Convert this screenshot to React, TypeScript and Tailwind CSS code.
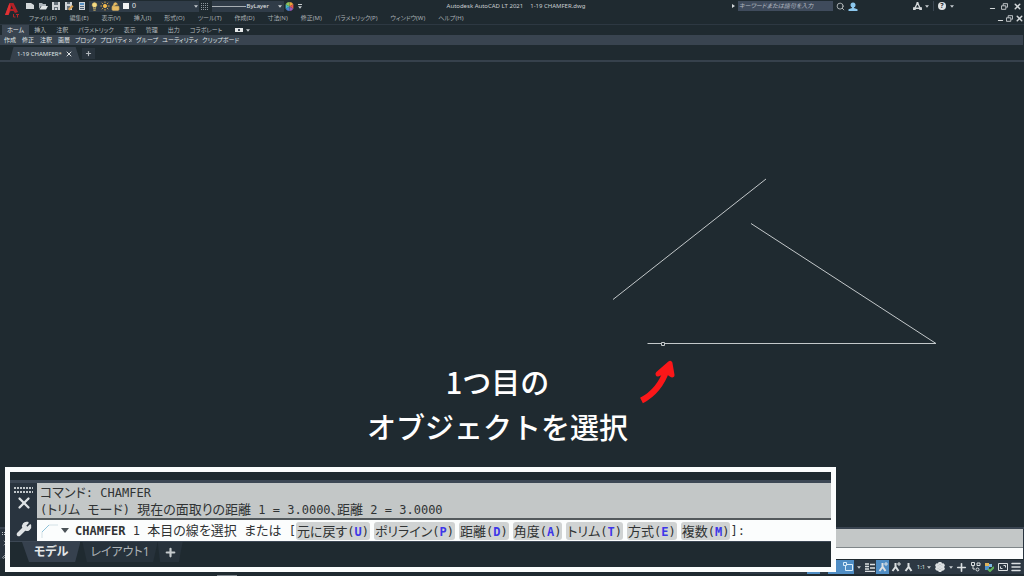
import type { ReactNode } from 'react';
import { Lightbulb, Sun, LockOpen, Search, Settings, Plus, X, Copy, Menu, Wrench, Minus } from 'lucide-react';

const menus = ['ファイル(F)', '編集(E)', '表示(V)', '挿入(I)', '形式(O)', 'ツール(T)', '作成(D)', '寸法(N)', '修正(M)', 'パラメトリック(P)', 'ウィンドウ(W)', 'ヘルプ(H)'];
const ribbonTabs = ['ホーム', '挿入', '注釈', 'パラメトリック', '表示', '管理', '出力', 'コラボレート'];
const panels = ['作成', '修正', '注釈', '画層', 'ブロック', 'プロパティ', 'グループ', 'ユーティリティ', 'クリップボード'];

const options = [
  { label: '元に戻す', hotkey: 'U' },
  { label: 'ポリライン', hotkey: 'P' },
  { label: '距離', hotkey: 'D' },
  { label: '角度', hotkey: 'A' },
  { label: 'トリム', hotkey: 'T' },
  { label: '方式', hotkey: 'E' },
  { label: '複数', hotkey: 'M' },
];

function Caret() {
  return (
    <svg viewBox="0 0 6 4" className="h-[3px] w-[4px] shrink-0 fill-[#c6cbcf]">
      <path d="M0 0h6L3 4z" />
    </svg>
  );
}

// ASCII runs use the monospaced face, Japanese runs the proportional one
function CommandText({ text }: { text: string }) {
  return (
    <>
      {text.split(/([ -~]+)/).map((part, i) =>
        i % 2 ? (
          <span key={i} className="font-['DejaVu_Sans_Mono',monospace] text-[12px]">{part}</span>
        ) : (
          part
        ),
      )}
    </>
  );
}

function Logo() {
  return (
    <svg viewBox="0 0 18 20" className="h-[20px] w-[18px]">
      <path d="M2 14 6.500 2h4l4.500 9-3 1-1.500-2H7.500L5.500 14z" fill="#b32227" />
      <path d="M8.500 4.500 10 8H7.500z" fill="#1f2a30" />
      <path d="M2 14 6.500 2 7.500 6 5.500 14z" fill="#e03234" />
      <path d="M10.500 13v3h2M13 13.500h3M14.500 13.500v3" stroke="#b3262a" fill="none" />
    </svg>
  );
}

function TitleBar() {
  return (
    <div className="flex h-[12px] items-center">
      <div className="flex flex-1 items-center">
        <div className="flex items-center gap-[3px] text-[#d4d8da]">
          <button aria-label="新規作成">
            <svg viewBox="0 0 10 8" className="h-[8px] w-[10px]"><path d="M1 1h5l3 2v4H1z" fill="#d4d8da" /></svg>
          </button>
          <button aria-label="開く">
            <svg viewBox="0 0 10 8" className="h-[8px] w-[10px]">
              <path d="M1 7V1h3l1 1h3v2H3z" fill="#aeb5ba" />
              <path d="M1.500 7.500 3.500 4H10L8 7.500z" fill="#e3e6e7" />
            </svg>
          </button>
          <button aria-label="上書き保存">
            <svg viewBox="0 0 10 10" className="size-[10px]">
              <path d="M1 1h8v8H1z" fill="#cfd4d7" />
              <path d="M3 1h4v3H3zM3 6h4v3H3z" fill="#66717a" />
              <path d="M4 7h2v2H4z" fill="#cfd4d7" />
            </svg>
          </button>
          <button aria-label="名前を付けて保存">
            <svg viewBox="0 0 10 10" className="size-[10px]">
              <path d="M1 1h7v8H1z" fill="#cfd4d7" />
              <path d="M3 1h3v2H3zM3 5h3v4H3z" fill="#66717a" />
              <path d="M4 8l4-4 1.500 1.500-4 4z" fill="#d9a254" />
            </svg>
          </button>
          <button aria-label="印刷">
            <svg viewBox="0 0 10 10" className="size-[10px]">
              <path d="M2 1h6v8H2z" fill="#cfd4d7" />
              <path d="M3 2h4v2H3z" fill="#568fc2" />
              <path d="M3 5h4v1H3zM3 7h4v1H3z" fill="#4b6078" />
            </svg>
          </button>
        </div>
        <button className="ml-[2px] flex h-[11px] w-[110px] items-center gap-[1px] bg-[#303c48] px-[1px] text-[#e4e7e9]">
          <Lightbulb className="size-[9px] text-[#efcf70]" fill="#f5db85" />
          <Sun className="size-[10px] text-[#f0b84c]" fill="#f0b84c" />
          <LockOpen className="size-[9px] text-[#e7bb62]" fill="#e7bb62" />
          <span className="ml-[2px] size-[6px] bg-[#f1f2f2]" />
          <span className="ml-[2px] flex-1 text-left text-[7px]">0</span>
          <Caret />
        </button>
        <svg viewBox="0 0 8 7" className="ml-[2px] h-[7px] w-[8px]">
          <path d="M0 .5h8M0 2.500h8M0 4.500h8M0 6.500h8" stroke="#8c959c" strokeDasharray="1 1" />
        </svg>
        <button className="ml-[3px] flex h-[11px] w-[72px] items-center gap-[1px] bg-[#303c48] pr-[2px] text-[#e4e7e9]">
          <span className="h-px flex-1 bg-[#a8afb4]" />
          <span>ByLayer</span>
          <span className="w-[7px]" />
          <Caret />
        </button>
        <svg viewBox="0 0 10 10" className="ml-px size-[9px]">
          <path d="M5 5V0a5 5 0 0 1 4.300 2.500z" fill="#e8a33d" />
          <path d="M5 5 9.300 2.500v5z" fill="#e4574f" />
          <path d="M5 5l4.300 2.500A5 5 0 0 1 5 10z" fill="#9a58b5" />
          <path d="M5 5v5A5 5 0 0 1 .7 7.500z" fill="#4b80d1" />
          <path d="M5 5 .7 7.500v-5z" fill="#46b7c0" />
          <path d="M5 5 .7 2.500A5 5 0 0 1 5 0z" fill="#8fc35b" />
        </svg>
        <span className="ml-[4px] flex flex-col items-center gap-px">
          <span className="h-px w-[4px] bg-[#c6cbcf]" />
          <Caret />
        </span>
      </div>
      <div className="flex gap-[7px] pr-[17px] text-[#c9ced1]">
        <span>Autodesk AutoCAD LT 2021</span>
        <span>1-19 CHAMFER.dwg</span>
      </div>
      <div className="flex flex-1 items-center justify-end text-[#d4d8da]">
        <svg viewBox="0 0 3 4" className="mr-[3px] h-[4px] w-[3px]"><path d="M0 0l3 2-3 2z" fill="#d4d8da" /></svg>
        <input aria-label="検索" placeholder="キーワードまたは語句を入力" className="h-[10px] w-[95px] bg-[#3f4b5c] px-[1px] italic placeholder:text-[#b4bac2]" />
        <button aria-label="検索を実行" className="ml-[3px]"><Search className="size-[9px]" /></button>
        <button aria-label="サインイン" className="ml-[3px]">
          <svg viewBox="0 0 10 9" className="h-[9px] w-[10px]" fill="#8cc8ee"><circle cx="5" cy="3" r="2.500" /><path d="M4 5h2v1l3.500 1.200V9H.5V7.200L4 6z" /></svg>
        </button>
        <button aria-label="アプリ" className="ml-[55px] flex items-center gap-[3px]">
          <svg viewBox="0 0 10 9" className="h-[8px] w-[9px]"><path d="M5 1 2 7h6L5 1" fill="none" stroke="#d4d8da" strokeWidth="1.500" /><path d="M0 6h3v3H0zM7 6h3v3H7zM4 0h2v3H4z" fill="#d4d8da" /></svg>
          <Caret />
        </button>
        <span className="mx-[4px] h-[10px] w-px bg-[#3b4651]" />
        <button aria-label="ヘルプ" className="flex items-center gap-[4px]">
          <span className="flex size-[8px] items-center justify-center rounded-full bg-[#dfe2e3] text-[7px] font-bold text-[#1f2a30]">?</span>
          <Caret />
        </button>
        <WindowButtons className="ml-[35px] gap-[5px] pr-[2px]" />
      </div>
    </div>
  );
}

function WindowButtons({ className }: { className: string }) {
  return (
    <div className={`flex items-center text-[#d4d8da] ${className}`}>
      <button aria-label="最小化" className="pt-[4px]"><Minus className="size-[7px]" strokeWidth={4} /></button>
      <button aria-label="元のサイズに戻す">
        <svg viewBox="0 0 8 8" className="size-[7px]" fill="none" stroke="currentColor"><path d="M2.500 3V.8h5v4H6M.5 3.200h5v4h-5z" /></svg>
      </button>
      <button aria-label="閉じる"><X className="size-[9px]" strokeWidth={4} /></button>
    </div>
  );
}

function Ribbon() {
  return (
    <>
      <div className="flex h-[10px] items-center pl-[2px] text-[#b2b8bc]">
        {ribbonTabs.map((tab, i) => (
          <button key={tab} className={`h-[10px] px-[5px] ${i === 0 ? 'bg-[#394450] text-[#e4e7e8]' : ''}`}>{tab}</button>
        ))}
        <button aria-label="リボンを最小化" className="ml-[8px] flex items-center gap-[3px]">
          <span className="flex h-[4px] w-[8px] items-center justify-center bg-[#e4e7e8]">
            <span className="size-[2px] bg-[#394450]" />
          </span>
          <Caret />
        </button>
      </div>
      <div className="mr-px flex h-[10px] items-center bg-[#394450] pl-px text-[#dfe2e4]">
        {panels.map((panel) => (
          <button key={panel} className={`flex items-center gap-[2px] ${panel.length > 2 ? 'px-[2px]' : 'px-[3px]'}`}>
            {panel}
            {panel === 'プロパティ' && (
              <svg viewBox="0 0 4 4" className="size-[3px]"><path d="M0 0l2 2-2 2M2 0l2 2-2 2" fill="none" stroke="#c6cbcf" /></svg>
            )}
          </button>
        ))}
      </div>
      <div className="flex h-[15px] items-end gap-[2px] pl-[10px]">
        <div className="flex h-[13px] items-center bg-[#36414c] pr-[7px] pl-[7px] text-[#dfe2e4] [clip-path:polygon(5%_0,94%_0,100%_100%,0_100%)]">
          <button>1-19 CHAMFER*</button>
          <button aria-label="図面を閉じる" className="ml-[3px]"><X className="size-[8px]" strokeWidth={3} /></button>
        </div>
        <button aria-label="新しい図面" className="mb-px flex h-[11px] w-[13px] items-center justify-center bg-[#29343d] text-[#b2b8bc]"><Plus className="size-[7px]" strokeWidth={4} /></button>
      </div>
      <div className="h-[2px] bg-[#36414c]" />
    </>
  );
}

function DrawingArea() {
  return (
    <main className="relative flex-1">
      <svg viewBox="0 0 1024 465" className="block w-full" fill="none">
        <g stroke="#c3c8ca" strokeWidth="1">
          <path d="M613 237.500 766 117M751 161.500l185 120M647.500 281.500H936" />
          <path d="M661.500 280.500h3v3h-3z" fill="#1f2a30" />
        </g>
        <path d="M641.500 338.500C654 332 662 322 667 307" stroke="#fb1719" strokeWidth="6" />
        <path d="M658 312 670 301.500 672 313 666 309z" fill="#fb1719" stroke="#fb1719" strokeWidth="5" strokeLinejoin="round" />
      </svg>
      <p className="absolute inset-x-0 top-[297px] pr-[29px] text-center font-['Noto_Sans_CJK_JP',sans-serif] text-[29px] leading-[45px] font-medium text-white [font-feature-settings:normal]">
        1つ目の
        <br />
        オブジェクトを選択
      </p>
    </main>
  );
}

function DockedCommandLine() {
  return (
    <div className="flex border-t-2 border-[#394450] bg-[#29343f] pr-px">
      <div className="flex w-[12px] flex-col items-center gap-[4px] pt-[3px] text-[#cfd4d7]">
        <svg viewBox="0 0 8 3" className="h-[3px] w-[8px]"><path d="M0 .5h8M0 2.500h8" stroke="#c0c6ca" strokeDasharray="1 1" /></svg>
        <X className="size-[8px]" />
        <Wrench className="size-[8px]" />
      </div>
      <div className="flex-1">
        <div className="h-[19px] border-b border-[#7f8689] bg-[#c3c7c7]" />
        <div className="h-[11px] bg-[#fbfdfd]" />
      </div>
    </div>
  );
}

function CommandPanel() {
  return (
    <section aria-label="コマンド ライン" className="absolute bottom-[4px] left-[5px] w-[831px] border-[5px] border-[#fbfdfd] bg-[#1f2a30] pt-[8px]">
      <div className="flex border-t-[3px] border-[#3c4754] bg-[#29343f]">
        <div className="flex w-[27px] shrink-0 flex-col items-center pt-[4px] text-[#dfe3e5]">
          <svg viewBox="0 0 19 6" className="h-[6px] w-[19px]">
            <path d="M0 1h19M0 5h19" stroke="#c0c6ca" strokeWidth="2" strokeDasharray="2 1" />
          </svg>
          <button aria-label="閉じる" className="mt-px"><X className="size-[18px]" strokeWidth={3} /></button>
          <button aria-label="カスタマイズ" className="mt-[9px]"><Wrench className="size-[16px]" fill="currentColor" /></button>
        </div>
        <div className="min-w-0 flex-1 text-[13px] text-[#303334]">
          <div className="h-[37px] border-b-2 border-[#53595c] bg-[#c3c7c7] px-[3px] pt-[1px] leading-[16px]">
            <p><CommandText text="コマンド: CHAMFER" /></p>
            <p><CommandText text="(トリム モード) 現在の面取りの距離 1 = 3.0000、距離 2 = 3.0000" /></p>
          </div>
          <div className="flex h-[21px] items-center bg-[#fbfdfd] pl-[4px]">
            <svg viewBox="0 0 18 16" className="h-[16px] w-[18px] shrink-0" fill="none">
              <path d="M1 15V9l7-7h9" stroke="#d3e1e6" />
              <path d="M1 9 8 2" stroke="#8fc2d8" />
            </svg>
            <svg viewBox="0 0 8 5" className="mx-[2px] h-[5px] w-[8px] shrink-0"><path d="M0 0h8L4 5z" fill="#4b5257" /></svg>
            <label htmlFor="command" className="ml-[4px] whitespace-pre">
              <b><CommandText text="CHAMFER" /></b>
              <CommandText text=" 1 本目の線を選択 または [" />
            </label>
            <div className="flex gap-[4px]">
              {options.map((option) => (
                <button key={option.hotkey} className="h-[18px] rounded-[3px] bg-[#d0d3d3] px-[1px] leading-[18px] whitespace-nowrap">
                  {option.label}
                  <span className="font-['DejaVu_Sans_Mono',monospace] text-[12px]">
                    (<b className="text-[#3d37e8]">{option.hotkey}</b>)
                  </span>
                </button>
              ))}
            </div>
            <CommandText text="]:" />
            <input id="command" className="w-0 min-w-0 flex-1 outline-none" />
          </div>
        </div>
      </div>
      <div className="flex h-[26px] items-start border-t border-[#3c4754] pl-[12px] text-[12px] leading-[20px]">
        <button className="h-[20px] bg-[#36414e] px-[12px] font-bold text-[#e4e7e8] [clip-path:polygon(0_0,100%_0,91%_100%,12%_100%)]">モデル</button>
        <button className="ml-[2px] h-[20px] bg-[#27323b] px-[8px] text-[#adb3b7] [clip-path:polygon(0_0,100%_0,94%_100%,6%_100%)]">レイアウト1</button>
        <button aria-label="新しいレイアウト" className="flex h-[20px] items-center bg-[#27323b] px-[6px] text-[#c6cbce] [clip-path:polygon(0_0,100%_0,85%_100%,10%_100%)]"><Plus className="size-[13px]" strokeWidth={4} /></button>
      </div>
    </section>
  );
}

function ToolButton({ label, active, children }: { label: string; active?: boolean; children?: ReactNode }) {
  return (
    <button aria-label={label} className={`flex h-[14px] w-[13px] shrink-0 items-center justify-center ${active ? 'bg-[#4f8dc4]' : ''}`}>
      {children}
    </button>
  );
}

function AnnotationIcon({ mark }: { mark?: string }) {
  return (
    <svg viewBox="0 0 10 10" className="size-[10px]" fill="none" stroke="currentColor">
      <path d="M4.500 1v4L1.500 9M4.500 4.500l3 4.500" strokeWidth="2" />
      {mark && <path d={mark} />}
    </svg>
  );
}

function StatusBar() {
  return (
    <footer className="flex h-[17px] items-start justify-between text-[#dce0e2]">
      <span className="mt-[16px] ml-[217px] h-px w-[20px] bg-[#7d868c]" />
      <div className="mt-px flex h-[14px] items-center bg-[#2d3843] pr-[2px] pl-[67px]">
        <ToolButton label="直交モード" active />
        <span className="w-[8px]" />
        <ToolButton label="極トラッキング" active />
        <ToolButton label="オブジェクト スナップ" active>
          <svg viewBox="0 0 10 10" className="size-[10px]" fill="none" stroke="#d8ecfa"><path d="M4 2.500h5.500v6h-7V4" /><path d="M.5.500h3v3h-3z" /></svg>
        </ToolButton>
        <button aria-label="スナップ設定" className="flex w-[9px] justify-center"><Caret /></button>
        <ToolButton label="線の太さ">
          <svg viewBox="0 0 10 9" className="h-[9px] w-[10px]" stroke="currentColor"><path d="M0 1h4M0 3.500h4M0 6h4M0 8.500h10M5 1.500h5M5 5h5" strokeWidth="1.500" /></svg>
        </ToolButton>
        <ToolButton label="注釈オブジェクトを表示" active><AnnotationIcon mark="M7 1h2v2H7z" /></ToolButton>
        <ToolButton label="尺度を自動追加"><AnnotationIcon mark="M8 0v4M6 2h4" /></ToolButton>
        <ToolButton label="注釈尺度"><AnnotationIcon /></ToolButton>
        <button className="flex w-[18px] items-center justify-center gap-[2px]">1:1<Caret /></button>
        <ToolButton label="ワークスペース">
          <Settings className="size-[10px]" strokeWidth={5} />
        </ToolButton>
        <button aria-label="ワークスペース一覧" className="flex w-[9px] justify-center"><Caret /></button>
        <ToolButton label="注釈モニター"><Plus className="size-[13px]" strokeWidth={3} /></ToolButton>
        <span className="w-px" />
        <ToolButton label="オブジェクトを選択表示">
          <svg viewBox="0 0 10 10" className="size-[10px]" fill="none" stroke="currentColor"><path d="M.5.500h3v3h-3zM2 4v3h2M6 1h3v2.500H6z" /><circle cx="6.500" cy="7.500" r="1.500" /></svg>
        </ToolButton>
        <ToolButton label="グラフィックス パフォーマンス">
          <svg viewBox="0 0 10 10" className="size-[10px]"><path d="M1 1h4v3H1z" fill="#e0b35a" /><path d="M1 4h4v4H1z" fill="#4f93cf" /><path d="M5 2h3v3H5z" fill="#7db7e3" /><path d="M4 7l2 2 4-4" fill="none" stroke="#62b25a" strokeWidth="2" /></svg>
        </ToolButton>
        <span className="w-px" />
        <ToolButton label="フルスクリーン表示">
          <svg viewBox="0 0 10 8" className="h-[8px] w-[10px]" fill="none" stroke="currentColor"><path d="M.5.500h9v7h-9zM5.500 2.500h2v2M4.500 5.500h-2v-2" /></svg>
        </ToolButton>
        <ToolButton label="カスタマイズ"><Menu className="size-[12px]" strokeWidth={3} /></ToolButton>
      </div>
    </footer>
  );
}

export default function App() {
  return (
    <div lang="ja" className="relative flex min-h-screen flex-col overflow-hidden bg-[#1f2a30] font-['Noto_Sans','Noto_Sans_CJK_JP',sans-serif] text-[6px] leading-[10px] [font-feature-settings:'palt']">
      <header>
        <div className="flex border-b border-[#2d3842]">
          <div className="w-[25px] pt-[1px] pl-[3px]"><Logo /></div>
          <div className="min-w-0 flex-1">
            <TitleBar />
            <nav className="flex h-[12px] items-center gap-[13px] pl-[4px] text-[#a9b0b4]">
              {menus.map((menu) => <button key={menu} className="whitespace-nowrap">{menu}</button>)}
              <WindowButtons className="ml-auto gap-[2px]" />
            </nav>
          </div>
        </div>
        <Ribbon />
      </header>
      <DrawingArea />
      <DockedCommandLine />
      <CommandPanel />
      <StatusBar />
    </div>
  );
}
